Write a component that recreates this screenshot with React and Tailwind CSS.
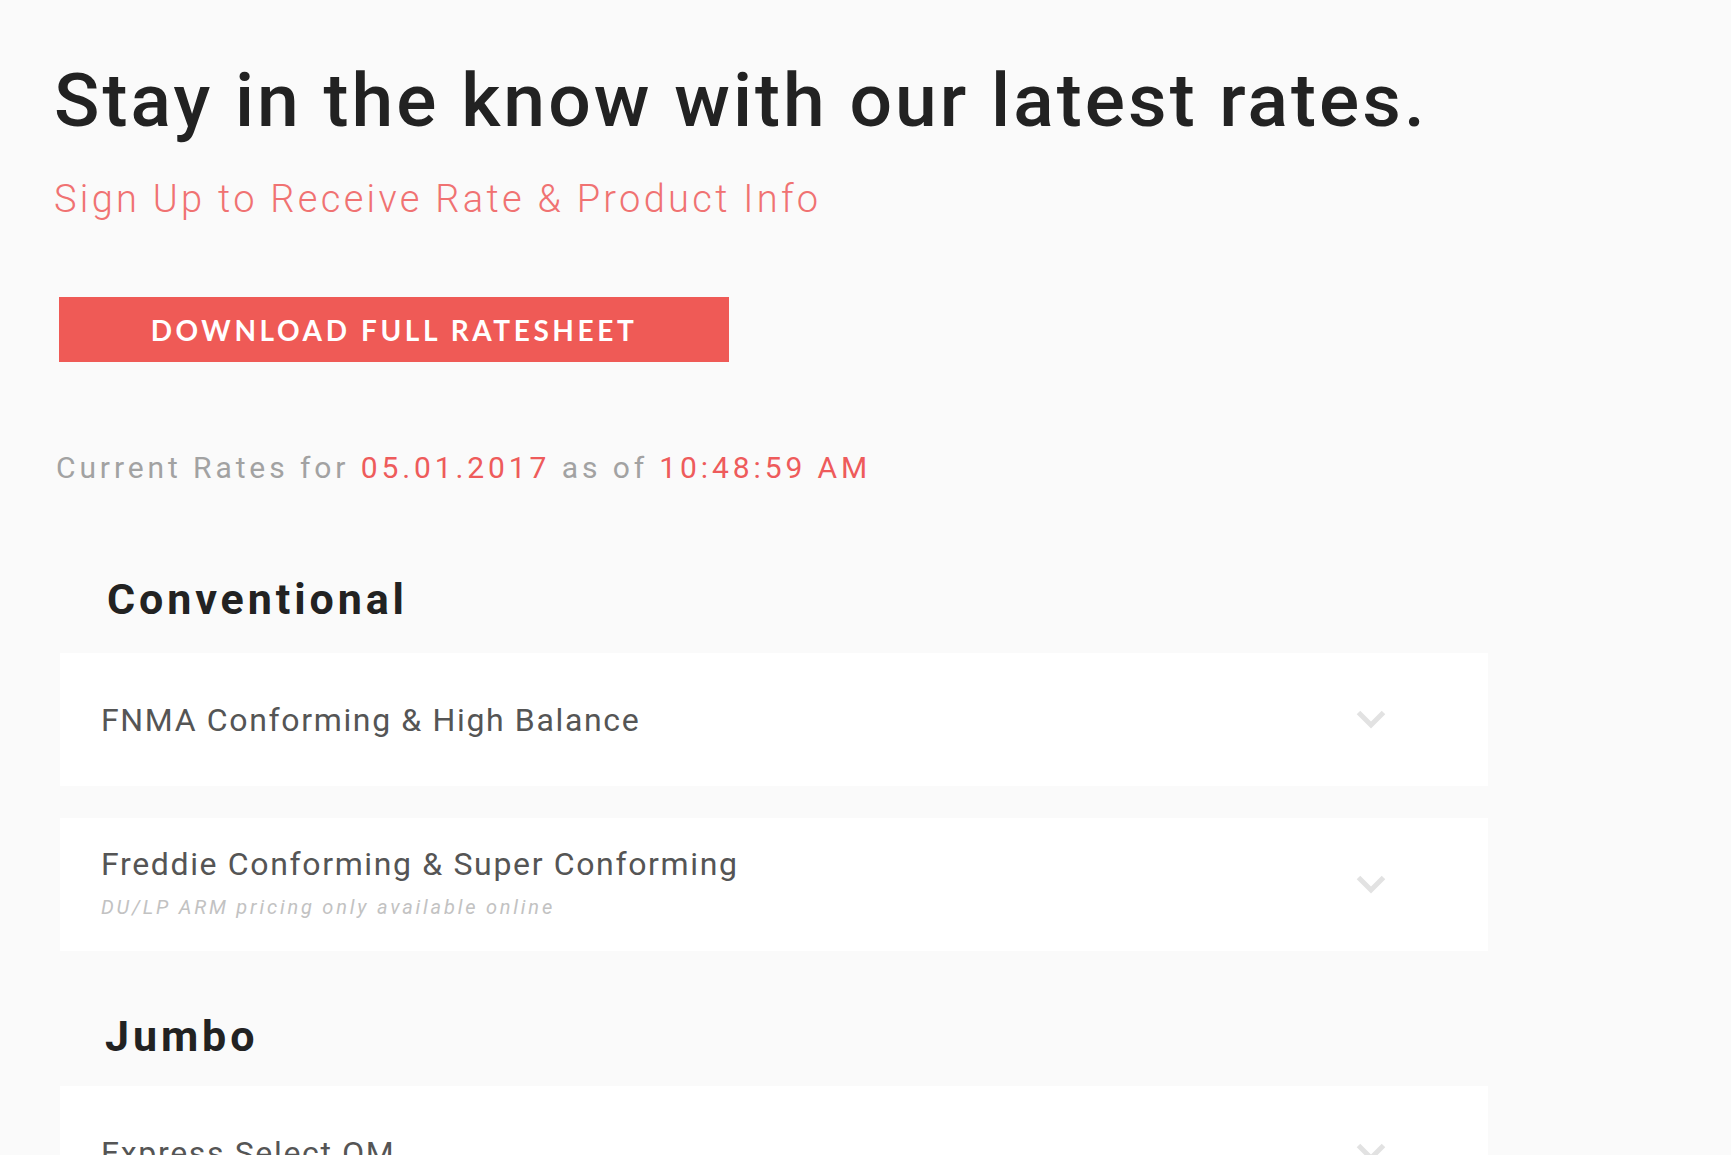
import React from "react";

const Chevron = () => (
  <svg width="30" height="19" viewBox="0 0 30 19" className="shrink-0">
    <polyline points="2.5,2.5 15,15 27.5,2.5" fill="none" stroke="#e2e2e2" strokeWidth="5" />
  </svg>
);

const Card = ({ title, sub }) => (
  <div className="flex h-[133px] w-[1428px] items-center justify-between bg-white pl-[41px] pr-[102px]">
    <div className={sub ? "mb-[6px] flex flex-col" : "flex flex-col"}>
      <div className="text-[32px] leading-[40px] tracking-[1.65px] text-[#555555]">{title}</div>
      {sub && (
        <div className="mt-[10px] text-[20px] leading-[26px] italic tracking-[2.8px] text-[#c2c2c2]">{sub}</div>
      )}
    </div>
    <Chevron />
  </div>
);

export default function App() {
  return (
    <div
      className="min-h-[1155px] w-full overflow-hidden bg-[#fafafa] pl-[54px] pt-[55px]"
      style={{ fontFamily: "Roboto, 'Liberation Sans', sans-serif" }}
    >
      <h1 className="whitespace-nowrap text-[75px] font-medium leading-[90px] tracking-[3.05px] text-[#222222]">
        Stay in the know with our latest rates.
      </h1>
      <div className="mt-[30px] whitespace-nowrap text-[38px] font-light leading-[48px] tracking-[3.3px] text-[#f07272]">
        Sign Up to Receive Rate &amp; Product Info
      </div>
      <div className="mt-[74px] ml-[5px] flex h-[65px] w-[670px] items-center justify-center bg-[#ef5a56]">
        <span
          className="text-[28px] font-bold tracking-[3.6px] text-white"
          style={{ fontFamily: "Lato, 'Open Sans', sans-serif" }}
        >
          DOWNLOAD FULL RATESHEET
        </span>
      </div>
      <div className="mt-[86px] ml-[2px] whitespace-nowrap text-[30px] leading-[40px] tracking-[3.9px] text-[#a2a2a2]">
        Current Rates for <span className="text-[#ee5b5b]">05.01.2017</span> as of{" "}
        <span className="text-[#ee5b5b]">10:48:59 AM</span>
      </div>
      <div className="mt-[86px] ml-[53px] text-[43px] font-bold leading-[50px] tracking-[3.9px] text-[#222222]">
        Conventional
      </div>
      <div className="ml-[6px] mt-[29px] flex flex-col gap-[32px]">
        <Card title="FNMA Conforming & High Balance" />
        <Card title="Freddie Conforming & Super Conforming" sub="DU/LP ARM pricing only available online" />
      </div>
      <div className="mt-[60px] ml-[51px] text-[43px] font-bold leading-[50px] tracking-[3.9px] text-[#222222]">
        Jumbo
      </div>
      <div className="ml-[6px] mt-[25px] flex flex-col gap-[32px]">
        <Card title="Express Select QM" />
      </div>
    </div>
  );
}
